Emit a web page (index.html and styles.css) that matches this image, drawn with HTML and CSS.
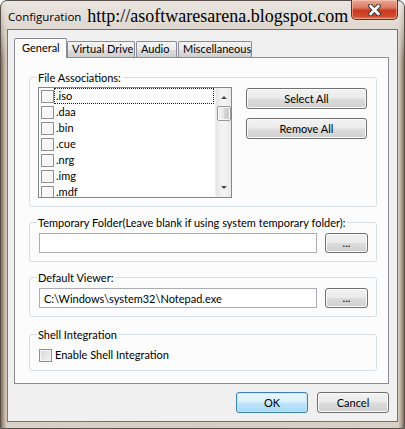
FILE: index.html
```html
<!DOCTYPE html>
<html lang="en">
<head>
  <meta charset="UTF-8">
  <meta name="viewport" content="width=device-width, initial-scale=1.0">
  <title>Configuration</title>
  <link rel="stylesheet" href="styles.css">
</head>
<body>
  <div class="window">
    <div class="titlebar">
      <span class="title">Configuration</span>
      <span class="url">http://asoftwaresarena.blogspot.com</span>
      <button class="close" title="Close">
        <svg width="15" height="12" viewBox="0 0 15 12">
          <path d="M3.5 2 L11.5 10 M11.5 2 L3.5 10" stroke="#3a3a3a" stroke-width="4.6" stroke-linecap="round"/>
          <path d="M3.5 2 L11.5 10 M11.5 2 L3.5 10" stroke="#fff" stroke-width="2.6" stroke-linecap="round"/>
        </svg>
      </button>
    </div>

    <div class="client">
      <div class="tabs">
        <div class="tab active">General</div>
        <div class="tab tab-drive">Virtual Drive</div>
        <div class="tab tab-audio">Audio</div>
        <div class="tab tab-misc">Miscellaneous</div>
      </div>

      <div class="panel">
        <fieldset class="group group-assoc">
          <legend>File Associations:</legend>
          <div class="assoc-row">
            <div class="listbox">
              <ul class="items">
                <li class="focused"><span class="check"></span><span class="item-text">.iso</span></li>
                <li><span class="check"></span><span class="item-text">.daa</span></li>
                <li><span class="check"></span><span class="item-text">.bin</span></li>
                <li><span class="check"></span><span class="item-text">.cue</span></li>
                <li><span class="check"></span><span class="item-text">.nrg</span></li>
                <li><span class="check"></span><span class="item-text">.img</span></li>
                <li><span class="check"></span><span class="item-text">.mdf</span></li>
              </ul>
              <div class="scrollbar">
                <span class="arrow arrow-up"></span>
                <span class="thumb"></span>
                <span class="arrow arrow-down"></span>
              </div>
            </div>
            <div class="side-buttons">
              <button class="btn">Select All</button>
              <button class="btn">Remove All</button>
            </div>
          </div>
        </fieldset>

        <fieldset class="group group-path">
          <legend>Temporary Folder(Leave blank if using system temporary folder):</legend>
          <div class="path-row">
            <input class="field" type="text" value="">
            <button class="btn btn-browse">...</button>
          </div>
        </fieldset>

        <fieldset class="group group-path">
          <legend>Default Viewer:</legend>
          <div class="path-row">
            <input class="field" type="text" value="C:\Windows\system32\Notepad.exe">
            <button class="btn btn-browse">...</button>
          </div>
        </fieldset>

        <fieldset class="group group-shell">
          <legend>Shell Integration</legend>
          <label class="check-label"><span class="check check-big"></span>Enable Shell Integration</label>
        </fieldset>
      </div>

      <div class="footer">
        <button class="btn btn-dialog btn-default">OK</button>
        <button class="btn btn-dialog">Cancel</button>
      </div>
    </div>
  </div>
</body>
</html>
```

FILE: styles.css
```css
body {
  margin: 0;
  background: #fff;
  font-family: Lato, "Open Sans", sans-serif;
  font-size: 11px;
  color: #000;
}

.window {
  width: 405px;
  height: 429px;
  box-sizing: border-box;
  padding: 0 6px 6px;
  border: 1px solid #58514b;
  border-radius: 7px 7px 0 0;
  background:
    linear-gradient(180deg, rgba(236, 232, 227, 0.9) 0, rgba(226, 220, 213, 0.6) 30px, rgba(0, 0, 0, 0) 60px),
    linear-gradient(90deg, #7e6958 0, #b9a998 3px, #d9d0c6 6px, #d6cdc3 50%, #d9d0c6 calc(100% - 6px), #b9a998 calc(100% - 3px), #7e6958 100%);
  display: flex;
  flex-direction: column;
}

/* title bar */

.titlebar {
  height: 28px;
  position: relative;
  display: flex;
  align-items: center;
  padding-left: 1px;
}

.title {
  font-family: "Open Sans", sans-serif;
  font-size: 11.5px;
  padding-top: 2px;
}

.url {
  font-family: "Liberation Serif", serif;
  font-size: 18px;
  margin-left: 6px;
  padding-top: 2px;
}

.close {
  position: absolute;
  top: -1px;
  right: 0;
  width: 47px;
  height: 20px;
  padding: 0;
  border: 1px solid #6e2a20;
  border-top: none;
  border-radius: 0 0 5px 5px;
  background: linear-gradient(180deg, #e9a796 0, #dc7a64 40%, #c8381f 55%, #d04a2d 85%, #e07a5c 100%);
  box-shadow: inset 0 0 0 1px rgba(255, 220, 200, 0.45);
  display: flex;
  align-items: center;
  justify-content: center;
}

/* client area */

.client {
  flex: 1;
  background: #f0f0f0;
  border: 1px solid #77716b;
  padding: 8px 8px 0 6px;
}

.tabs {
  display: flex;
  align-items: flex-end;
  height: 19px;
}

.tab {
  height: 16px;
  box-sizing: border-box;
  border: 1px solid #898c95;
  border-bottom: none;
  background: linear-gradient(180deg, #f3f3f3 0, #ebebeb 50%, #dedede 51%, #cfcfcf 100%);
  border-radius: 2px 2px 0 0;
  padding-left: 4px;
  line-height: 14px;
  margin-left: 1px;
}

.tab.active {
  height: 20px;
  width: 53px;
  margin-left: 0;
  margin-bottom: -1px;
  background: #fcfcfc;
  padding-left: 7px;
  line-height: 17px;
  position: relative;
}

.tab-drive {
  width: 68px;
  margin-left: 0;
}

.tab-audio {
  width: 41px;
}

.tab-misc {
  width: 74px;
}

.panel {
  height: 327px;
  box-sizing: border-box;
  border: 1px solid #898c95;
  background: #fcfcfc;
  padding: 13px 11px 0 14px;
}

/* group boxes */

.group {
  margin: 0 0 9px;
  padding: 0;
  width: 348px;
  box-sizing: border-box;
  border: 1px solid #d5dfe5;
  border-radius: 3px;
  min-width: 0;
}

.group legend {
  padding: 0 2px 0 1px;
  margin-left: -2px;
  line-height: 13px;
}

.group-assoc {
  padding: 3px 0 8px 8px;
}

.group-assoc legend {
  margin-left: -1px;
}

.assoc-row {
  display: flex;
  align-items: flex-start;
}

.listbox {
  width: 194px;
  height: 111px;
  box-sizing: border-box;
  border: 1px solid #828790;
  background: #fff;
  display: flex;
  overflow: hidden;
}

.items {
  list-style: none;
  margin: 0;
  padding: 0 1px 0 2px;
  flex: 1;
}

.items li {
  display: flex;
  align-items: center;
  height: 16px;
}

.item-text {
  flex: 1;
  height: 14px;
  line-height: 13px;
  padding-left: 1px;
  border: 1px solid transparent;
}

.focused .item-text {
  border: 1px dotted #222;
}

.check {
  width: 13px;
  height: 13px;
  box-sizing: border-box;
  border: 1px solid #8f8f8f;
  background: linear-gradient(135deg, #fbfbfb 0, #f4f4f4 100%);
  flex: none;
}

.check-big {
  border-color: #8e8f8f;
  background: linear-gradient(135deg, #d9d9d9 0, #f0f0f0 100%);
  box-shadow: inset 0 0 0 1px #f6f6f6;
  margin-right: 2px;
}

.scrollbar {
  width: 16px;
  flex: none;
  background: linear-gradient(90deg, #e6e6e6 0, #f3f3f3 40%, #f3f3f3 60%, #e9e9e9 100%);
  border-left: 1px solid #efefef;
  display: flex;
  flex-direction: column;
  align-items: center;
  padding-top: 8px;
  box-sizing: border-box;
}

.arrow {
  width: 0;
  height: 0;
  border-left: 3px solid transparent;
  border-right: 3px solid transparent;
}

.arrow-up {
  border-bottom: 3px solid #4d4d4d;
}

.arrow-down {
  margin-top: auto;
  margin-bottom: 8px;
  border-top: 3px solid #4d4d4d;
}

.thumb {
  width: 14px;
  height: 15px;
  box-sizing: border-box;
  margin-top: 7px;
  border: 1px solid #979797;
  border-radius: 2px;
  background: linear-gradient(90deg, #f4f4f4 0, #e6e6e6 45%, #d3d3d3 55%, #c9c9c9 100%);
  box-shadow: inset 0 0 0 1px #fafafa;
}

.side-buttons {
  display: flex;
  flex-direction: column;
  gap: 9px;
  margin-left: 14px;
  margin-top: 1px;
}

/* buttons */

.btn {
  font-family: inherit;
  font-size: 11px;
  color: #000;
  width: 121px;
  height: 21px;
  padding: 0;
  border: 1px solid #707070;
  border-radius: 3px;
  background: linear-gradient(180deg, #f2f2f2 0, #ebebeb 48%, #dddddd 52%, #cfcfcf 100%);
  box-shadow: inset 0 0 0 1px #fbfbfb;
}

.btn-browse {
  width: 43px;
  height: 20px;
  line-height: 14px;
}

.btn-dialog {
  width: 72px;
  height: 21px;
}

.btn-default {
  border-color: #3c7fb1;
  background: linear-gradient(180deg, #eaf6fd 0, #d9f0fc 48%, #bee6fd 52%, #a7d9f5 100%);
  box-shadow: inset 0 0 0 1px #c8e7f8;
}

/* path rows */

.group-path {
  padding: 4px 0 8px 9px;
}

.path-row {
  display: flex;
  align-items: center;
  gap: 8px;
}

.field {
  width: 278px;
  height: 20px;
  box-sizing: border-box;
  border: 1px solid #abadb3;
  border-radius: 0;
  background: #fff;
  font-family: inherit;
  font-size: 11px;
  padding: 0 4px;
  color: #000;
  outline: none;
}

.group-shell {
  margin-top: 11px;
  padding: 7px 0 8px 9px;
}

.check-label {
  display: flex;
  align-items: center;
  gap: 1px;
  line-height: 14px;
}

/* dialog buttons */

.footer {
  display: flex;
  justify-content: flex-end;
  gap: 9px;
  margin-top: 8px;
}
```
